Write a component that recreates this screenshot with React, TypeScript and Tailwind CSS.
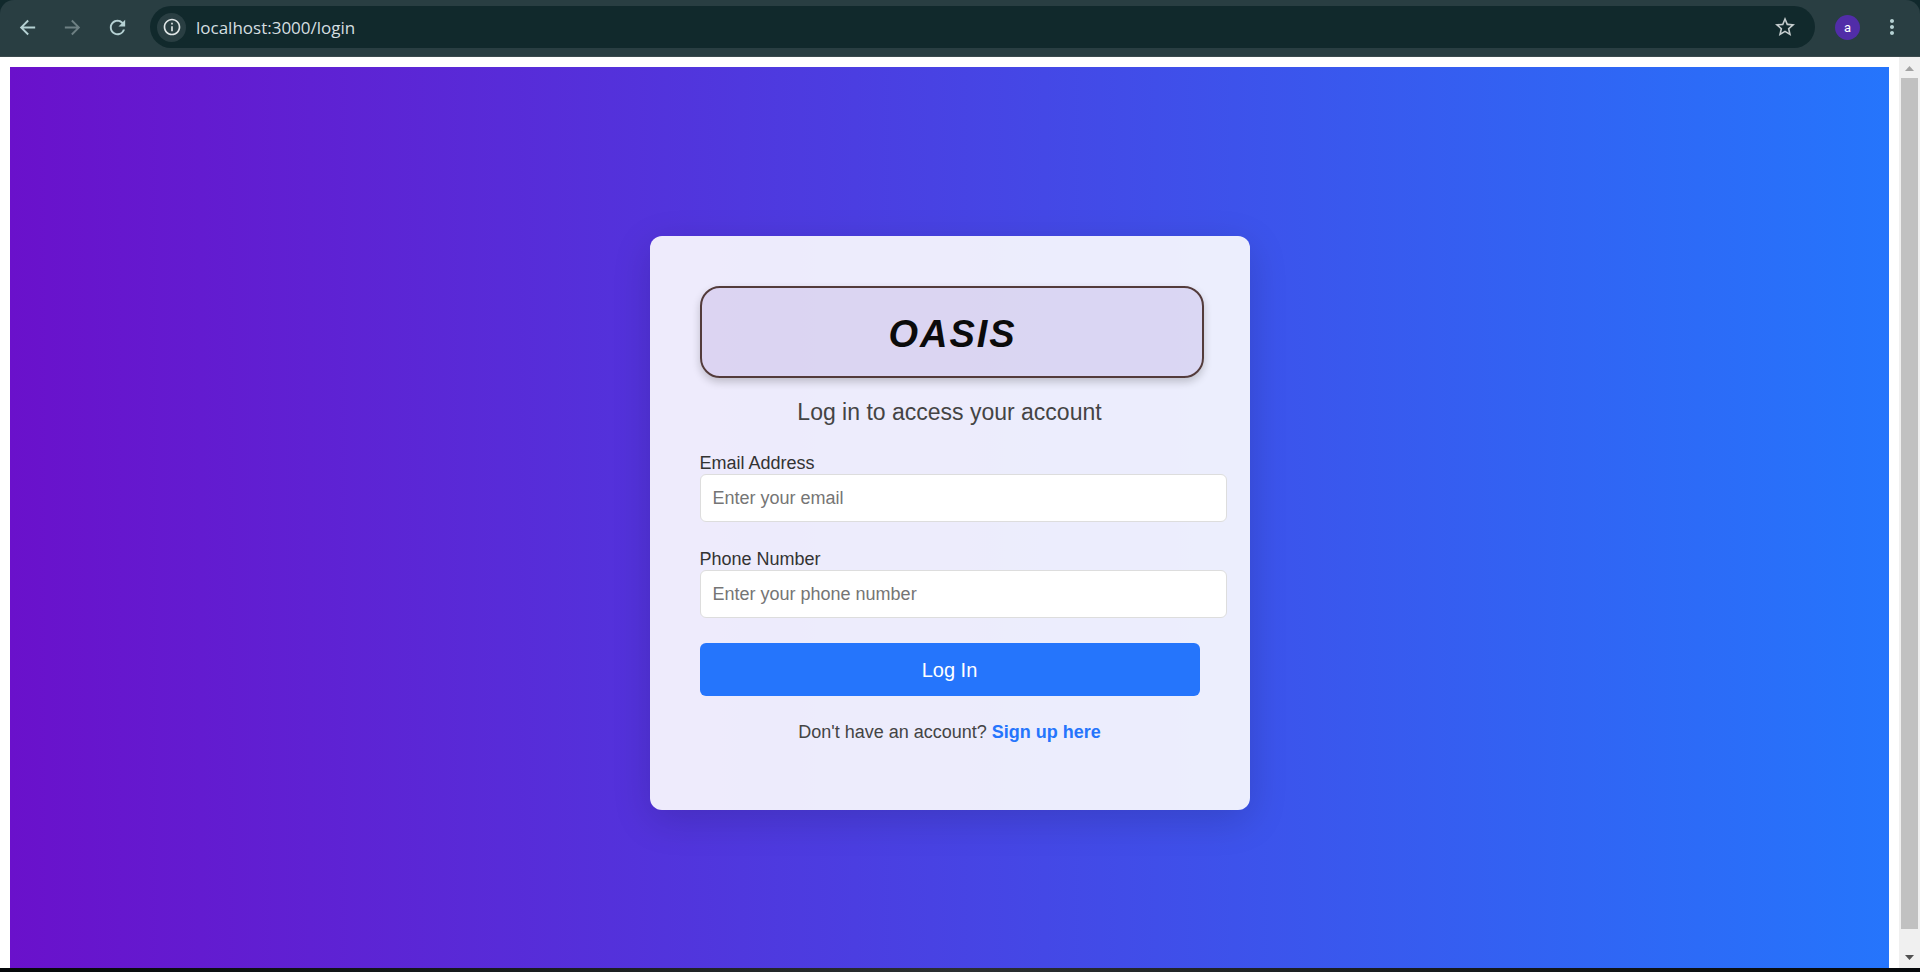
import { MdArrowBack, MdArrowForward, MdInfoOutline, MdMoreVert, MdRefresh, MdStarBorder } from "react-icons/md";

function BrowserBar() {
  return (
    <div className="bg-[#11292c]">
      <header className="flex h-[57px] items-center rounded-t-[14px] border-b border-[#3b4a4d] bg-[#293e42] pb-1 pr-4 pt-[2px] text-[#b5d1d3]">
        <nav className="flex items-center gap-[21px] pl-4">
          <button type="button" aria-label="Back" className="size-6">
            <MdArrowBack className="size-[23px]" />
          </button>
          <button type="button" aria-label="Forward" className="size-6 text-[#6e8083]" disabled>
            <MdArrowForward className="size-[23px]" />
          </button>
          <button type="button" aria-label="Reload" className="size-6">
            <MdRefresh className="size-[23px]" />
          </button>
        </nav>
        <div className="ml-5 flex h-[42px] flex-1 items-center rounded-full bg-[#11292c] pl-[7px] pr-[18px]">
          <button
            type="button"
            aria-label="Site information"
            className="flex size-[29px] items-center justify-center rounded-full bg-[#293e42] text-[#dfe5e6]"
          >
            <MdInfoOutline className="size-5" />
          </button>
          <input
            aria-label="Address"
            defaultValue="localhost:3000/login"
            className="ml-[10px] min-w-0 flex-1 bg-transparent pt-[2px] font-['Open_Sans',sans-serif] text-[17px] text-[#d5dfe0] outline-none"
          />
          <button type="button" aria-label="Bookmark this page" className="text-[#c4cccd]">
            <MdStarBorder className="size-6" />
          </button>
        </div>
        <button
          type="button"
          aria-label="Profile"
          className="ml-5 flex size-[25px] items-center justify-center rounded-full bg-[#512da8] font-[Roboto,sans-serif] text-[13px] leading-none text-white"
        >
          a
        </button>
        <button type="button" aria-label="Menu" className="ml-5">
          <MdMoreVert className="size-6" />
        </button>
      </header>
    </div>
  );
}

function ScrollBar() {
  return (
    <div className="flex w-[21px] shrink-0 flex-col items-center bg-[#f0f0f0]" aria-hidden="true">
      <svg viewBox="0 0 21 21" className="size-[21px]">
        <path d="M6 14 L10.5 9 L15 14 Z" fill="#a3a3a3" />
      </svg>
      <div className="w-[17px] flex-1 bg-[#c1c1c1]" />
      <div className="h-[18px]" />
      <svg viewBox="0 0 21 21" className="size-[21px]">
        <path d="M6 8 L10.5 13 L15 8 Z" fill="#505050" />
      </svg>
    </div>
  );
}

type FieldProps = { id: string; label: string; type: string; placeholder: string };

function Field({ id, label, type, placeholder }: FieldProps) {
  return (
    <div className="mb-6 -mr-[27px]">
      <label htmlFor={id} className="block h-6 pt-[2px] text-[18px] leading-[22px] text-[#333333]">
        {label}
      </label>
      <input
        id={id}
        type={type}
        placeholder={placeholder}
        className="block h-12 w-full rounded-md border border-[#dddddd] bg-white px-3 text-[18px] text-[#333333] placeholder-[#757575]"
      />
    </div>
  );
}

function LoginCard() {
  return (
    <section className="w-[600px] rounded-[12px] bg-white/90 px-[50px] pb-[66px] pt-[50px] text-center shadow-[0_10px_38px_rgba(0,0,0,0.15)]">
      <h1 className="-mr-1 flex h-[92px] items-center justify-center rounded-[20px] border-2 border-[#533b3b] bg-[#5b31ac]/12 pl-[2px] pt-1 text-[38px] font-bold italic tracking-[2px] text-[#0b0b0b] shadow-[0_4px_8px_rgba(0,0,0,0.2)]">
        OASIS
      </h1>
      <p className="mt-5 text-[23px] leading-7 text-[#444444]">Log in to access your account</p>
      <form className="mt-6 text-left" onSubmit={(event) => event.preventDefault()}>
        <Field id="email" label="Email Address" type="email" placeholder="Enter your email" />
        <Field id="phone" label="Phone Number" type="tel" placeholder="Enter your phone number" />
        <button type="submit" className="mt-px h-[53px] w-full rounded-md bg-[#2575fc] text-xl text-white">
          Log In
        </button>
      </form>
      <p className="mt-6 text-[18px] leading-6 text-[#444444]">
        Don't have an account?{" "}
        <a href="/signup" className="font-bold text-[#2575fc]">
          Sign up here
        </a>
      </p>
    </section>
  );
}

export default function App() {
  return (
    <div className="flex h-screen flex-col overflow-hidden bg-white font-['Liberation_Sans',Arial,sans-serif]">
      <BrowserBar />
      <div className="flex min-h-0 flex-1">
        <main className="mx-[10px] mt-[10px] flex min-w-0 flex-1 items-start justify-center bg-linear-to-r/srgb from-[#6a11cb] to-[#2575fc] pt-[169px]">
          <LoginCard />
        </main>
        <ScrollBar />
      </div>
      <div className="h-1 shrink-0 bg-linear-to-r from-[#05080a] via-[#2b2f31] to-[#05080a]" />
    </div>
  );
}
